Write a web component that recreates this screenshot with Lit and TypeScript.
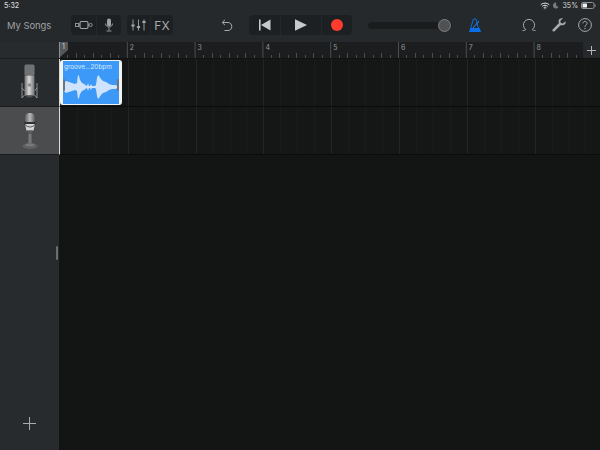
import { html, css, svg, LitElement } from 'lit'
import { customElement } from 'lit/decorators.js'

const BAR = 67.8

// tick marks of the ruler, 8 per bar
function rulerMarks() {
  const out = []
  for (let i = 0; i < 8; i++) {
    const x = i * BAR
    if (i > 0) out.push(svg`<line x1=${x + 0.5} x2=${x + 0.5} y1="0" y2="16" stroke="#4c4f50"></line>`)
    if (i > 0) out.push(svg`<text x=${x + 3} y="7.5" class="num">${i + 1}</text>`)
    for (let k = 1; k < 8; k++) {
      const tx = Math.round(x + (k * BAR) / 8) + 0.5
      const top = k % 2 === 0 ? 11 : 13
      out.push(svg`<line x1=${tx} x2=${tx} y1=${top} y2="16" stroke="#4a4c4d"></line>`)
    }
  }
  return out
}

// vertical grid lines of a lane
function laneLines() {
  const out = []
  for (let i = 0; i < 32; i++) {
    const x = Math.round((i * BAR) / 4) + 0.5
    const col = i % 4 === 0 ? '#232525' : '#1a1c1c'
    out.push(svg`<line x1=${x} x2=${x} y1="0" y2="48" stroke=${col}></line>`)
  }
  return out
}

// waveform envelope of the clip: [x, amplitude]
const ENVELOPE = [
  [0, 3], [3, 6], [6, 5], [9, 4], [12, 3], [14, 4], [15, 12], [16, 11], [17, 7], [19, 4], [21, 3],
  [23, 1.5], [24, 1], [25, 4], [26, 1], [27, 1], [28, 3], [29, 1], [32, 1], [33, 2], [34, 9], [35, 12],
  [36, 11], [38, 8], [40, 6], [43, 5], [46, 3], [49, 2], [52, 2], [55, 1],
]

function wavePath() {
  const mid = 16
  const top = ENVELOPE.map(([x, a]) => `${x} ${mid - a}`)
  const bottom = [...ENVELOPE].reverse().map(([x, a]) => `${x} ${mid + a}`)
  return `M${top.join('L')}L${bottom.join('L')}Z`
}

@customElement('app-root')
export class AppRoot extends LitElement {
  static styles = css`
    :host {
      display: flex;
      flex-direction: column;
      width: 600px;
      height: 450px;
      overflow: hidden;
      background: #131515;
      font-family: 'Inter', 'Liberation Sans', sans-serif;
      color: #b5b7b8;
    }
    svg {
      display: block;
    }
    .top {
      background: #25292b;
      height: 42px;
      flex: none;
    }
    .status {
      display: flex;
      align-items: center;
      height: 11px;
      padding: 0 4px;
      font-size: 7px;
      color: #d8d8d8;
    }
    .status .time {
      flex: 1;
      font-weight: 500;
    }
    .status .right {
      display: flex;
      align-items: center;
      gap: 3px;
    }
    .bar {
      display: flex;
      align-items: center;
      height: 20px;
      margin-top: 4px;
    }
    .songs {
      width: 71px;
      padding-left: 7px;
      box-sizing: border-box;
      font-size: 9.4px;
      color: #a0a2a3;
      white-space: nowrap;
    }
    .group {
      display: flex;
      height: 20px;
      background: #1d2022;
      border-radius: 4px;
    }
    .cell {
      display: flex;
      align-items: center;
      justify-content: center;
      border-left: 1px solid #25282a;
      box-sizing: border-box;
    }
    .cell:first-child {
      border-left: none;
    }
    .fx {
      font-size: 12px;
      color: #a6a8a9;
    }
    .slider {
      position: relative;
      width: 84px;
      height: 7px;
      margin-left: 16px;
      background: #1a1d1e;
      border-radius: 4px;
    }
    .knob {
      position: absolute;
      right: 1px;
      top: -3px;
      width: 11px;
      height: 11px;
      border-radius: 50%;
      background: #4f5152;
      border: 1px solid #7c7e7f;
    }
    .main {
      flex: 1;
      display: flex;
      min-height: 0;
    }
    .side {
      position: relative;
      width: 59px;
      flex: none;
      display: flex;
      flex-direction: column;
      background: #272b2d;
    }
    .side-gap {
      height: 17px;
      flex: none;
      border-bottom: 1px solid #1b1d1e;
      box-sizing: border-box;
    }
    .head {
      height: 48px;
      flex: none;
      display: flex;
      align-items: center;
      justify-content: center;
      box-sizing: border-box;
      border-bottom: 1px solid #191b1c;
    }
    .head.sel {
      background: #4b4c4d;
    }
    .side-rest {
      flex: 1;
      display: flex;
      align-items: flex-end;
      justify-content: center;
      padding-bottom: 20px;
    }
    .handle {
      position: absolute;
      left: 56px;
      top: 204px;
      width: 2px;
      height: 14px;
      background: #6a6d6e;
      border-radius: 1px;
    }
    .timeline {
      flex: 1;
      display: flex;
      flex-direction: column;
      min-width: 0;
    }
    .ruler-row {
      display: flex;
      height: 17px;
      flex: none;
      border-bottom: 1px solid #101111;
      box-sizing: border-box;
    }
    .ruler {
      position: relative;
      flex: 1;
      background: #1b1d1e;
      overflow: hidden;
    }
    .add {
      width: 17px;
      display: flex;
      align-items: center;
      justify-content: center;
      background: #25292b;
    }
    .num {
      font: 7px 'Inter', 'Liberation Sans', sans-serif;
      fill: #96989a;
    }
    .lane {
      position: relative;
      height: 48px;
      flex: none;
      background: #151717;
      border-bottom: 1px solid #0a0b0b;
      box-sizing: border-box;
    }
    .lane.playhead {
      border-left: 1px solid #d8d8d8;
      box-sizing: border-box;
    }
    .clip {
      position: absolute;
      left: 0;
      top: 1px;
      width: 62px;
      height: 45px;
      box-sizing: border-box;
      background: #3d99f8;
      border: solid #f1f3f5;
      border-width: 1px 3px;
      border-radius: 3px;
      overflow: hidden;
    }
    .clip-name {
      padding: 2px 0 0 1px;
      font-size: 6.4px;
      line-height: 8px;
      color: #d6e9fd;
      white-space: nowrap;
    }
    .grip {
      position: absolute;
      top: 18px;
      width: 2px;
      height: 12px;
      background: #6f757a;
      border-radius: 1px;
    }
    .grip.l {
      left: 0;
    }
    .grip.r {
      right: 0;
    }
    .rest {
      flex: 1;
      background: #131515;
    }
  `

  render() {
    return html`
      <div class="top">
        <div class="status">
          <span class="time">5:32</span>
          <span class="right">
            <svg width="10" height="8" viewBox="0 0 10 8" fill="none" stroke="#e8e8e8" stroke-width="1">
              <path d="M.7 2.8C3 .6 7 .6 9.3 2.8M2.2 4.3C3.8 2.9 6.2 2.9 7.8 4.3M3.6 5.7C4.4 5 5.6 5 6.4 5.7"></path>
              <path d="M4 6.6L5 7.6L6 6.6Z" fill="#e8e8e8" stroke="none"></path>
            </svg>
            <svg width="6" height="7" viewBox="0 0 6 7"><path d="M3.4.5A3 3 0 1 0 5.5 5 3.4 3.4 0 0 1 3.4.5Z" fill="#77797a"></path></svg>
            <span style="margin-left:1px">35%</span>
            <svg width="15" height="7" viewBox="0 0 15 7">
              <rect x=".5" y=".5" width="12.5" height="6" rx="1.5" fill="none" stroke="#8f9192"></rect>
              <rect x="1.5" y="1.5" width="4.5" height="4" rx=".6" fill="#f2f2f2"></rect>
              <rect x="13.6" y="2.4" width="1" height="2.2" fill="#8f9192"></rect>
            </svg>
          </span>
        </div>
        <div class="bar">
          <div class="songs">My Songs</div>
          <div class="group" style="width:50px">
            <div class="cell" style="width:25px">
              <svg width="20" height="12" viewBox="0 0 20 12" fill="none" stroke="#a4a6a7" stroke-width=".8">
                <rect x="1.5" y="4.4" width="3.2" height="3.2"></rect>
                <rect x="6" y="2.5" width="8" height="7" rx="1.5" stroke-width="1.1"></rect>
                <circle cx="16.6" cy="6" r="1.6"></circle>
                <path d="M4.7 6H6M14 6H15"></path>
              </svg>
            </div>
            <div class="cell" style="width:25px">
              <svg width="10" height="14" viewBox="0 0 10 14">
                <rect x="3" y="0.5" width="4" height="8" rx="2" fill="#9fa1a2"></rect>
                <path d="M1.5 5.5C1.5 10.2 8.5 10.2 8.5 5.5M5 9.5V12.5M2.5 13H7.5" fill="none" stroke="#9fa1a2" stroke-width=".9"></path>
              </svg>
            </div>
          </div>
          <div class="group" style="width:46px;margin-left:6px">
            <div class="cell" style="width:23px">
              <svg width="15" height="12" viewBox="0 0 15 12" stroke="#a4a6a7" stroke-width=".9">
                <path d="M2 0.5V11.5M7.5 0.5V11.5M13 0.5V11.5"></path>
                <path d="M0.4 6.5H3.6M5.9 8H9.1M11.4 3H14.6" stroke-width="1.8"></path>
              </svg>
            </div>
            <div class="cell fx" style="width:23px">FX</div>
          </div>
          <svg style="margin-left:48px" width="12" height="13" viewBox="0 0 12 13" fill="none" stroke="#a8aaab" stroke-width="1">
            <path d="M1.5 3.5H7C12 3.5 12 11.5 7 11.5H3.5"></path>
            <path d="M4 .8L1.2 3.5L4 6.2"></path>
          </svg>
          <div class="group" style="width:103px;margin-left:16px">
            <div class="cell" style="width:31px">
              <svg width="12" height="12" viewBox="0 0 12 12" fill="#c8c9ca">
                <rect x="0" y="0.5" width="1.6" height="11"></rect>
                <path d="M11.5 .5V11.5L2 6Z"></path>
              </svg>
            </div>
            <div class="cell" style="width:41px">
              <svg width="12" height="12" viewBox="0 0 12 12"><path d="M0 .3V11.7L12 6Z" fill="#c8c9ca"></path></svg>
            </div>
            <div class="cell" style="width:31px">
              <svg width="12" height="12" viewBox="0 0 12 12"><circle cx="6" cy="6" r="6" fill="#ff3b30"></circle></svg>
            </div>
          </div>
          <div class="slider"><div class="knob"></div></div>
          <svg style="margin-left:17px" width="12" height="14" viewBox="0 0 12 14">
            <path d="M1.3 10H10.7L12 14H0Z" fill="#0a6fe6"></path>
            <path d="M1.8 10L4.4 1H7L9.4 10" fill="none" stroke="#0a6fe6" stroke-width="1"></path>
            <path d="M4 10L10 3" stroke="#2a8cf0" stroke-width="1"></path>
          </svg>
          <svg style="margin-left:41px" width="14" height="14" viewBox="0 0 14 14" fill="none" stroke="#a8aaab" stroke-width="1">
            <path d="M3.8 11.6A5.6 5.6 0 1 1 10.2 11.6"></path>
            <path d="M0.5 12.5C1.5 12.5 3 12.5 3.8 11.6M13.5 12.5C12.5 12.5 11 12.5 10.2 11.6"></path>
          </svg>
          <svg style="margin-left:16px" width="14" height="14" viewBox="0 0 14 14">
            <path d="M13.5 3.3L10.8 5.6L8.6 4.7L8.5 2.4L11 .6C8.8 -.3 6.3 1.2 6.6 3.8C6.7 4.4 6.8 4.8 7 5.1L.9 11.2C.1 12 .3 12.8.8 13.2C1.3 13.7 2.1 13.8 2.8 13.1L8.9 7C9.4 7.3 10 7.4 10.6 7.3C12.8 7.1 14.1 5.4 13.5 3.3Z" fill="#a8aaab"></path>
          </svg>
          <svg style="margin-left:12px" width="14" height="14" viewBox="0 0 14 14">
            <circle cx="7" cy="7" r="6.4" fill="none" stroke="#a8aaab" stroke-width="1"></circle>
            <path d="M4.9 5.4C4.9 2.8 9.1 2.8 9.1 5.4C9.1 7 7 7 7 8.8" fill="none" stroke="#a8aaab" stroke-width="1"></path>
            <circle cx="7" cy="10.5" r=".7" fill="#a8aaab"></circle>
          </svg>
        </div>
      </div>
      <div class="main">
        <div class="side">
          <div class="side-gap"></div>
          <div class="head">${this.condenserMic()}</div>
          <div class="head sel">${this.dynamicMic()}</div>
          <div class="side-rest">
            <svg width="13" height="13" viewBox="0 0 13 13" stroke="#a9abac" stroke-width="1"><path d="M6.5 0V13M0 6.5H13"></path></svg>
          </div>
          <div class="handle"></div>
        </div>
        <div class="timeline">
          <div class="ruler-row">
            <div class="ruler">
              <svg width="524" height="16" viewBox="0 0 524 16">
                ${rulerMarks()}
                <path d="M0 0H9V8L1 15V16H0Z" fill="#55585a"></path>
                <path d="M0.5 0V16" stroke="#8c8e8f"></path>
                <text x="3" y="7" class="num" style="fill:#d0d0d0">1</text>
              </svg>
            </div>
            <div class="add">
              <svg width="9" height="9" viewBox="0 0 9 9" stroke="#b4b6b7" stroke-width="1"><path d="M4.5 0V9M0 4.5H9"></path></svg>
            </div>
          </div>
          <div class="lane playhead">
            <svg width="541" height="47" viewBox="0 0 541 47">${laneLines()}</svg>
            <div class="clip">
              <div class="clip-name">groove...20bpm</div>
              <svg width="56" height="34" viewBox="0 0 56 34"><path fill="#cfe4fc" d=${wavePath()}></path></svg>
              <div class="grip l"></div>
              <div class="grip r"></div>
            </div>
          </div>
          <div class="lane playhead">
            <svg width="541" height="47" viewBox="0 0 541 47">${laneLines()}</svg>
          </div>
          <div class="rest"></div>
        </div>
      </div>
    `
  }

  private condenserMic() {
    return html`<svg width="18" height="38" viewBox="0 0 18 38">
      <defs>
        <linearGradient id="body" x1="0" x2="1" y1="0" y2="0">
          <stop offset="0" stop-color="#6d6f70"></stop>
          <stop offset=".45" stop-color="#d9dad8"></stop>
          <stop offset="1" stop-color="#6f7172"></stop>
        </linearGradient>
      </defs>
      <rect x="3.5" y="0.5" width="10" height="11" rx="1.5" fill="#77797a"></rect>
      <path d="M4.5 2H12.5M4.5 4H12.5M4.5 6H12.5M4.5 8H12.5M4.5 10H12.5" stroke="#5e6061" stroke-width=".6"></path>
      <rect x="3.5" y="11.5" width="10" height="20" fill="url(#body)"></rect>
      <circle cx="8.5" cy="21" r="1.8" fill="#8d8f8f"></circle>
      <rect x="5.5" y="31.5" width="6" height="2" fill="#4c4e4f"></rect>
      <path d="M1 19V34M16 19V34M1 24L3.5 27M16 24L13.5 27M1 34L3.5 31M16 34L13.5 31" stroke="#9a9c9d" stroke-width=".9" fill="none"></path>
    </svg>`
  }

  private dynamicMic() {
    return html`<svg width="24" height="38" viewBox="0 0 24 38">
      <defs>
        <linearGradient id="mic2" x1="0" x2="1" y1="0" y2="0">
          <stop offset="0" stop-color="#5f6061"></stop>
          <stop offset=".5" stop-color="#b9baba"></stop>
          <stop offset="1" stop-color="#555657"></stop>
        </linearGradient>
      </defs>
      <rect x="7" y="1" width="10" height="11" rx="4.5" fill="url(#mic2)"></rect>
      <rect x="7" y="10" width="10" height="2" fill="#2f3031"></rect>
      <path d="M7 12H17L15.5 18.5H8.5Z" fill="#d4d5d4"></path>
      <path d="M6 9C6 17 18 17 18 9" fill="none" stroke="#333" stroke-width=".8"></path>
      <path d="M9.5 18.5H14.5L13 22H11Z" fill="#5c5d5e"></path>
      <rect x="10.5" y="22" width="3" height="10" fill="#77787a"></rect>
      <ellipse cx="12" cy="34" rx="7.5" ry="3" fill="#5f6061"></ellipse>
      <ellipse cx="12" cy="33" rx="4.5" ry="1.4" fill="#77787a"></ellipse>
    </svg>`
  }
}
